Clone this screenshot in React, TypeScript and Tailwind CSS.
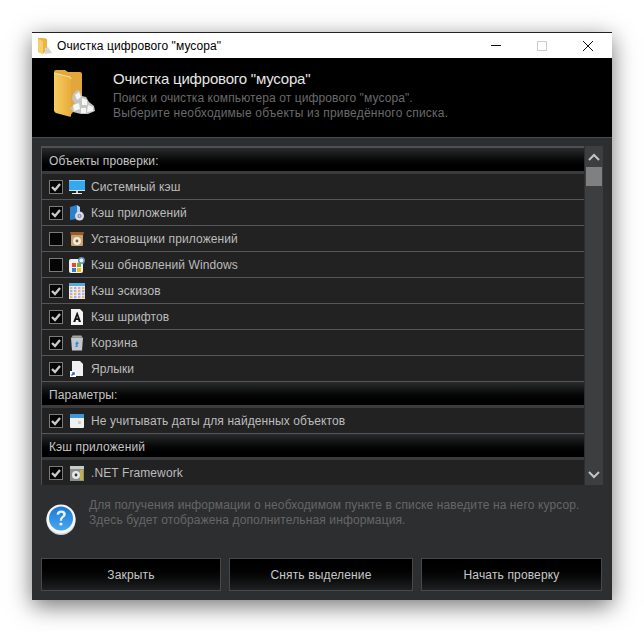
// App.tsx
import type { ReactNode } from "react";

const font = "font-['Liberation_Sans',Arial,sans-serif]";

const MonitorIcon = () => (
  <svg width="16" height="16" viewBox="0 0 16 16">
    <rect x="0" y="1" width="16" height="10" fill="#35a8ee" />
    <rect x="0" y="1" width="16" height="1" fill="#8ad4fa" />
    <rect x="0" y="11" width="16" height="1" fill="#d8dde2" />
    <rect x="7" y="12" width="2" height="2" fill="#c4c8cc" />
    <rect x="3" y="14" width="10" height="1" fill="#eef0f2" />
  </svg>
);

const DiscAppIcon = () => (
  <svg width="16" height="16" viewBox="0 0 16 16">
    <path d="M1 2 L8 0 L8 14 L1 15 Z" fill="#2f7fc8" />
    <path d="M8 0 L11 2 L11 9 L8 14 Z" fill="#a9d4f0" />
    <circle cx="10.5" cy="11" r="4.5" fill="#d8dbe2" />
    <circle cx="10.5" cy="11" r="2" fill="#7d86a8" />
    <circle cx="10.5" cy="11" r="0.8" fill="#f4f4f4" />
  </svg>
);

const InstallerIcon = () => (
  <svg width="16" height="16" viewBox="0 0 16 16">
    <path d="M1 1 L15 1 L14 5 L2 5 Z" fill="#9a5a2a" />
    <rect x="2" y="4" width="12" height="11" rx="1" fill="#c9a06e" />
    <circle cx="8" cy="10" r="4" fill="#f0ead8" />
    <circle cx="8" cy="10" r="1.4" fill="#7a5a3a" />
  </svg>
);

const WindowsUpdateIcon = () => (
  <svg width="16" height="16" viewBox="0 0 16 16">
    <rect x="0" y="2" width="14" height="14" rx="2" fill="#f2f2f2" />
    <rect x="3" y="6" width="4" height="4" fill="#e8492c" />
    <rect x="8" y="6" width="4" height="4" fill="#6cb52d" />
    <rect x="3" y="11" width="4" height="4" fill="#2f7fd8" />
    <rect x="8" y="11" width="4" height="4" fill="#f5b81f" />
    <circle cx="12.5" cy="3.5" r="3.5" fill="#5f93bd" />
    <circle cx="12.5" cy="3.5" r="2" fill="#eef4f8" />
  </svg>
);

const ThumbsIcon = () => (
  <svg width="16" height="16" viewBox="0 0 16 16">
    <rect x="0" y="0" width="16" height="16" fill="#e8eef4" />
    <rect x="0" y="0" width="16" height="3" fill="#5da6dc" />
    {[1, 5, 9, 13].map((x, i) =>
      [4, 7, 10, 13].map((y, j) => (
        <rect
          key={`${x}-${y}`}
          x={x}
          y={y}
          width="2.4"
          height="2.2"
          fill={(i + j) % 3 === 0 ? "#f2b35a" : (i + j) % 3 === 1 ? "#8fb8e8" : "#e0a0c0"}
        />
      ))
    )}
  </svg>
);

const FontIcon = () => (
  <svg width="16" height="16" viewBox="0 0 16 16">
    <path d="M2 0 H11 L14 3 V16 H2 Z" fill="#f4f4f4" />
    <path d="M8 3 L4.2 13 H6.4 L7 11 H9.2 L9.8 13 H12 L8.4 3 Z M7.5 9.3 L8.1 7 L8.8 9.3 Z" fill="#111" fillRule="evenodd" />
  </svg>
);

const BinIcon = () => (
  <svg width="16" height="16" viewBox="0 0 16 16">
    <rect x="3" y="0.5" width="10" height="2" rx="1" fill="#9fa4a8" />
    <path d="M2 2.5 H14 L13 15.5 H3 Z" fill="#c4c8cc" />
    <path d="M8 6 L10 9 L8.6 9 L8.6 12 L6 12 L7.4 10 L6 9 Z" fill="#2f8fd8" />
  </svg>
);

const ShortcutIcon = () => (
  <svg width="16" height="16" viewBox="0 0 16 16">
    <path d="M3 0 H11 L14 3 V15 H3 Z" fill="#eef0f2" />
    <rect x="1" y="10" width="6" height="6" fill="#fff" />
    <path d="M2.5 14.5 L5 12 M3.2 11.8 H5.2 V13.8" stroke="#1f5fb0" strokeWidth="1.2" fill="none" />
  </svg>
);

const CalendarIcon = () => (
  <svg width="16" height="16" viewBox="0 0 16 16">
    <rect x="1" y="1" width="14" height="14" rx="1" fill="#eef0f2" />
    <rect x="1" y="1" width="14" height="4" fill="#3d96dc" />
    <rect x="9" y="8" width="3" height="3" fill="#e8c8b8" />
  </svg>
);

const NetIcon = () => (
  <svg width="16" height="16" viewBox="0 0 16 16">
    <rect x="1" y="1" width="14" height="15" fill="#8a8f8a" />
    <rect x="1" y="1" width="14" height="3" fill="#c8ccc8" />
    <rect x="11" y="5" width="3" height="10" fill="#c2b04a" />
    <circle cx="7" cy="10" r="4" fill="#e4e6e8" />
    <circle cx="7" cy="10" r="1.4" fill="#333" />
  </svg>
);

const FolderIcon = () => (
  <svg width="44" height="48" viewBox="0 0 44 48">
    <defs>
      <linearGradient id="folderFront" x1="0" y1="0" x2="1" y2="0">
        <stop offset="0" stopColor="#f7cd62" />
        <stop offset="1" stopColor="#e8ac3c" />
      </linearGradient>
    </defs>
    <path d="M1 2 Q1 0 3 0 H12 L15 2 H27 Q29 2 29 4 V30 L17 46 L3 42 Q1 41 1 39 Z" fill="#e2a63a" />
    <path d="M1 3 L17 7 Q18 7 18 9 V46 Q18 47 16 46.5 L3 43 Q1 42 1 40 Z" fill="url(#folderFront)" />
    <path d="M1 3 L17 7 L18 9" stroke="#fbe39a" strokeWidth="1" fill="none" />
    <path d="M20 24 L24 20 L27 21 L29 26 L33 27 L36 32 L41 36 L42 41 L35 44 L28 44 L20 42 L17 38 L22 34 L19 29 Z" fill="#c4c4c0" />
    <path d="M22 25 L26 22 L28 27 L24 30 Z M29 28 L34 30 L34 35 L29 35 Z M20 35 L26 33 L27 39 L21 41 Z M35 35 L40 37 L40 41 L34 42 Z M28 38 L33 38 L33 43 L28 43 Z" fill="#f6f6f4" />
  </svg>
);

const SmallFolderIcon = () => (
  <svg width="16" height="18" viewBox="0 0 16 18">
    <path d="M1 1 H7 L10 2 V13 L6 17 L1 15 Z" fill="#eab449" />
    <path d="M1 2 L6 4 V17 L1 15 Z" fill="#f6cf68" />
    <path d="M8 11 L11 10 L13 13 L15 16 L8 17 Z" fill="#d4d4d0" />
  </svg>
);

const HelpIcon = () => (
  <svg width="30" height="32" viewBox="0 0 30 32">
    <defs>
      <linearGradient id="helpBlue" x1="0" y1="0" x2="0" y2="1">
        <stop offset="0" stopColor="#1a78d8" />
        <stop offset="1" stopColor="#4aa8ee" />
      </linearGradient>
    </defs>
    <circle cx="15" cy="16.5" r="14.5" fill="#cfd2d6" />
    <circle cx="15" cy="15" r="14.5" fill="#f6f7f8" />
    <circle cx="15" cy="14.5" r="12" fill="url(#helpBlue)" />
    <path d="M10.5 10.5 Q11 6.5 15.3 6.5 Q19.8 6.5 19.8 10.3 Q19.8 12.5 17.4 13.8 Q16 14.6 16 16.8 H13.8 Q13.6 13.6 15.6 12.4 Q17.2 11.4 17.2 10.4 Q17.2 8.8 15.2 8.8 Q13.4 8.8 13.1 10.8 Z" fill="#e8f2fb" />
    <circle cx="14.9" cy="20" r="1.6" fill="#e8f2fb" />
  </svg>
);

const Checkbox = ({ checked }: { checked: boolean }) => (
  <div className="flex h-[14px] w-[14px] items-center justify-center border border-[#7a7a7a] bg-[#050505]">
    {checked && (
      <svg width="10" height="10" viewBox="0 0 10 10">
        <path d="M1 5 L4 8 L9 2" stroke="#c8c8c8" strokeWidth="2.4" fill="none" />
      </svg>
    )}
  </div>
);

const SectionRow = ({ title }: { title: string }) => (
  <div className="flex h-[26px] items-center border-b-[3px] border-[#3a3b3d] bg-gradient-to-b from-[#2a2b2c] to-[#000000] pl-[7px] pt-[2px] text-[12px] tracking-[0.12px] text-[#c4c4c4]">
    {title}
  </div>
);

const ItemRow = ({ label, checked, icon }: { label: string; checked: boolean; icon: ReactNode }) => (
  <div className="flex h-[26px] items-center border-b border-[#55565a] bg-[#222222] pl-[7px] text-[12px] tracking-[0.1px] text-[#bcbcbc]">
    <Checkbox checked={checked} />
    <div className="ml-[6px] flex w-[16px] justify-center">{icon}</div>
    <span className="ml-[6px]">{label}</span>
  </div>
);

const ActionButton = ({ label, width }: { label: string; width: string }) => (
  <button
    className={`flex h-[33px] items-center justify-center border border-[#47484a] bg-gradient-to-b from-[#000000] to-[#1f2021] text-[12px] tracking-[0.15px] text-[#c8c8c8] ${width}`}
  >
    {label}
  </button>
);

export default function App() {
  return (
    <div className={`h-[632px] w-[644px] overflow-hidden bg-white pl-[32px] pt-[32px] ${font}`}>
      <div className="flex h-[568px] w-[580px] flex-col border-t border-[#222222] bg-[#2d2e30] shadow-[0_6px_22px_rgba(0,0,0,0.55)]">
        {/* title bar */}
        <div className="flex h-[25px] items-center bg-white pl-[5px] text-[12px] tracking-[0.08px] text-black">
          <SmallFolderIcon />
          <span className="ml-[4px]">Очистка цифрового "мусора"</span>
          <div className="ml-auto flex items-center">
            <svg width="12" height="12" viewBox="0 0 12 12" className="mr-[34px]">
              <rect x="1" y="5" width="10" height="1" fill="#111" />
            </svg>
            <svg width="12" height="12" viewBox="0 0 12 12" className="mr-[34px]">
              <rect x="1.5" y="1.5" width="9" height="9" stroke="#cfcfcf" fill="none" />
            </svg>
            <svg width="12" height="12" viewBox="0 0 12 12" className="mr-[18px]">
              <path d="M1 1 L11 11 M11 1 L1 11" stroke="#111" strokeWidth="1" />
            </svg>
          </div>
        </div>

        {/* header */}
        <div className="flex h-[80px] border-b border-[#4a4b4d] bg-black">
          <div className="ml-[21px] mt-[12px]">
            <FolderIcon />
          </div>
          <div className="ml-[16px] mt-[12px] flex flex-col">
            <div className="text-[15px] leading-[18px] tracking-[-0.2px] text-[#e6e6e6]">Очистка цифрового "мусора"</div>
            <div className="mt-[3px] text-[12px] leading-[15px] tracking-[0.1px] text-[#6a6a6a]">
              Поиск и очистка компьютера от цифрового "мусора".
            </div>
            <div className="text-[12px] leading-[15px] tracking-[0.2px] text-[#6a6a6a]">
              Выберите необходимые объекты из приведённого списка.
            </div>
          </div>
        </div>

        {/* list + scrollbar */}
        <div className="ml-[9px] mt-[8px] flex h-[339px] w-[562px] bg-[#2d2e30]">
          <div className="flex-1 overflow-hidden border-l border-t-2 border-[#4f5052] border-r-0">
            <SectionRow title="Объекты проверки:" />
            <ItemRow label="Системный кэш" checked icon={<MonitorIcon />} />
            <ItemRow label="Кэш приложений" checked icon={<DiscAppIcon />} />
            <ItemRow label="Установщики приложений" checked={false} icon={<InstallerIcon />} />
            <ItemRow label="Кэш обновлений Windows" checked={false} icon={<WindowsUpdateIcon />} />
            <ItemRow label="Кэш эскизов" checked icon={<ThumbsIcon />} />
            <ItemRow label="Кэш шрифтов" checked icon={<FontIcon />} />
            <ItemRow label="Корзина" checked icon={<BinIcon />} />
            <ItemRow label="Ярлыки" checked icon={<ShortcutIcon />} />
            <SectionRow title="Параметры:" />
            <ItemRow label="Не учитывать даты для найденных объектов" checked icon={<CalendarIcon />} />
            <SectionRow title="Кэш приложений" />
            <ItemRow label=".NET Framework" checked icon={<NetIcon />} />
          </div>
          <div className="ml-px flex w-[18px] flex-col bg-[#3d3e40]">
            <div className="flex h-[21px] items-center justify-center">
              <svg width="12" height="8" viewBox="0 0 12 8">
                <path d="M1 7 L6 2 L11 7" stroke="#c4c4c4" strokeWidth="2" fill="none" />
              </svg>
            </div>
            <div className="mx-px h-[19px] bg-[#808080]" />
            <div className="mt-auto flex h-[21px] items-center justify-center">
              <svg width="12" height="8" viewBox="0 0 12 8">
                <path d="M1 1 L6 6 L11 1" stroke="#c4c4c4" strokeWidth="2" fill="none" />
              </svg>
            </div>
          </div>
        </div>

        {/* hint */}
        <div className="ml-[14px] mt-[13px] flex">
          <div className="mt-[6px]">
            <HelpIcon />
          </div>
          <div className="ml-[13px] text-[12px] leading-[15px] tracking-[0.12px] text-[#666666]">
            <div>Для получения информации о необходимом пункте в списке наведите на него курсор.</div>
            <div>Здесь будет отображена дополнительная информация.</div>
          </div>
        </div>

        {/* buttons */}
        <div className="ml-[9px] mt-[22px] flex gap-[8px]">
          <ActionButton label="Закрыть" width="w-[180px]" />
          <ActionButton label="Снять выделение" width="w-[184px]" />
          <ActionButton label="Начать проверку" width="w-[181px]" />
        </div>
      </div>
    </div>
  );
}
